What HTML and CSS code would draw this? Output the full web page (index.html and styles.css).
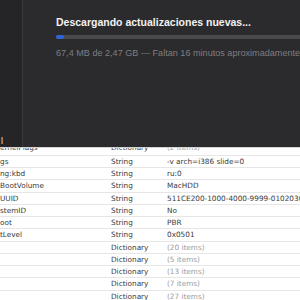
FILE: index.html
```html
<!DOCTYPE html>
<html lang="es">
<head>
  <meta charset="UTF-8" />
  <title>Actualización</title>
  <link rel="stylesheet" href="styles.css">
</head>
<body>

  <!-- Ventana de actualización -->
  <div class="dialog">
    <div class="sidebar"><span class="side-label">l</span></div>
    <div class="content">
      <div class="title">Descargando actualizaciones nuevas...</div>
      <div class="progress"><div class="progress-fill"></div></div>
      <div class="info">67,4 MB de 2,47 GB — Faltan 16 minutos aproximadamente</div>
    </div>
  </div>

  <!-- Editor plist -->
  <div class="plist">
    <div class="row first"><span class="key">ernelFlags</span><span class="type">Dictionary</span><span class="value muted">(2 items)</span></div>
    <div class="row"><span class="key">gs</span><span class="type">String</span><span class="value">-v arch=i386 slide=0</span></div>
    <div class="row"><span class="key">ng:kbd</span><span class="type">String</span><span class="value">ru:0</span></div>
    <div class="row"><span class="key">BootVolume</span><span class="type">String</span><span class="value">MacHDD</span></div>
    <div class="row"><span class="key">UUID</span><span class="type">String</span><span class="value">511CE200-1000-4000-9999-010203040506</span></div>
    <div class="row"><span class="key">stemID</span><span class="type">String</span><span class="value">No</span></div>
    <div class="row"><span class="key">oot</span><span class="type">String</span><span class="value">PBR</span></div>
    <div class="row"><span class="key">tLevel</span><span class="type">String</span><span class="value">0x0501</span></div>
    <div class="row"><span class="key"></span><span class="type">Dictionary</span><span class="value muted">(20 items)</span></div>
    <div class="row"><span class="key"></span><span class="type">Dictionary</span><span class="value muted">(5 items)</span></div>
    <div class="row"><span class="key"></span><span class="type">Dictionary</span><span class="value muted">(13 items)</span></div>
    <div class="row"><span class="key"></span><span class="type">Dictionary</span><span class="value muted">(7 items)</span></div>
    <div class="row"><span class="key"></span><span class="type">Dictionary</span><span class="value muted">(27 items)</span></div>
  </div>

</body>
</html>
```

FILE: styles.css
```css
* {
  margin: 0;
  padding: 0;
  box-sizing: border-box;
}

body {
  width: 300px;
  height: 300px;
  overflow: hidden;
  background: #fff;
  font-family: "Liberation Sans", Arial, sans-serif;
}

/* Ventana oscura */
.dialog {
  display: flex;
  height: 147px;
  background: #2b2b2d;
}

.sidebar {
  width: 23px;
  flex-shrink: 0;
  background: #252527;
  border-right: 1px solid #3a3a3c;
  display: flex;
  align-items: flex-end;
  overflow: hidden;
}

.side-label {
  color: #e8e8e8;
  font-size: 9px;
  line-height: 10px;
  padding: 0 0 1px 1px;
}

.content {
  flex: 1;
  padding: 16px 0 0 33px;
  white-space: nowrap;
  overflow: hidden;
}

.title {
  color: #f2f2f2;
  font-weight: bold;
  font-size: 10.5px;
  line-height: 12px;
}

.progress {
  width: 300px;
  height: 4px;
  margin-top: 7px;
  border-radius: 2px;
  background: #4a4a4c;
}

.progress-fill {
  width: 8px;
  height: 4px;
  border-radius: 2px;
  background: #2f62d6;
}

.info {
  margin-top: 9px;
  color: #7e7e82;
  font-size: 9.1px;
  line-height: 10px;
}

/* Tabla plist */
.plist {
  height: 153px;
  overflow: hidden;
  border-top: 1px solid #d4d4d4;
  font-family: "DejaVu Sans", sans-serif;
  font-size: 7.3px;
  color: #3a3a3a;
}

.row {
  display: grid;
  grid-template-columns: 111px 56px 1fr;
  align-items: center;
  height: 12.25px;
  border-bottom: 1px solid #e6e6e6;
  white-space: nowrap;
  overflow: hidden;
}

/* fila cortada por la ventana de arriba */
.row.first {
  height: 14.75px;
  margin-top: -7px;
}

.key,
.type,
.value {
  overflow: hidden;
}

.muted {
  color: #9c9c9c;
}
```
